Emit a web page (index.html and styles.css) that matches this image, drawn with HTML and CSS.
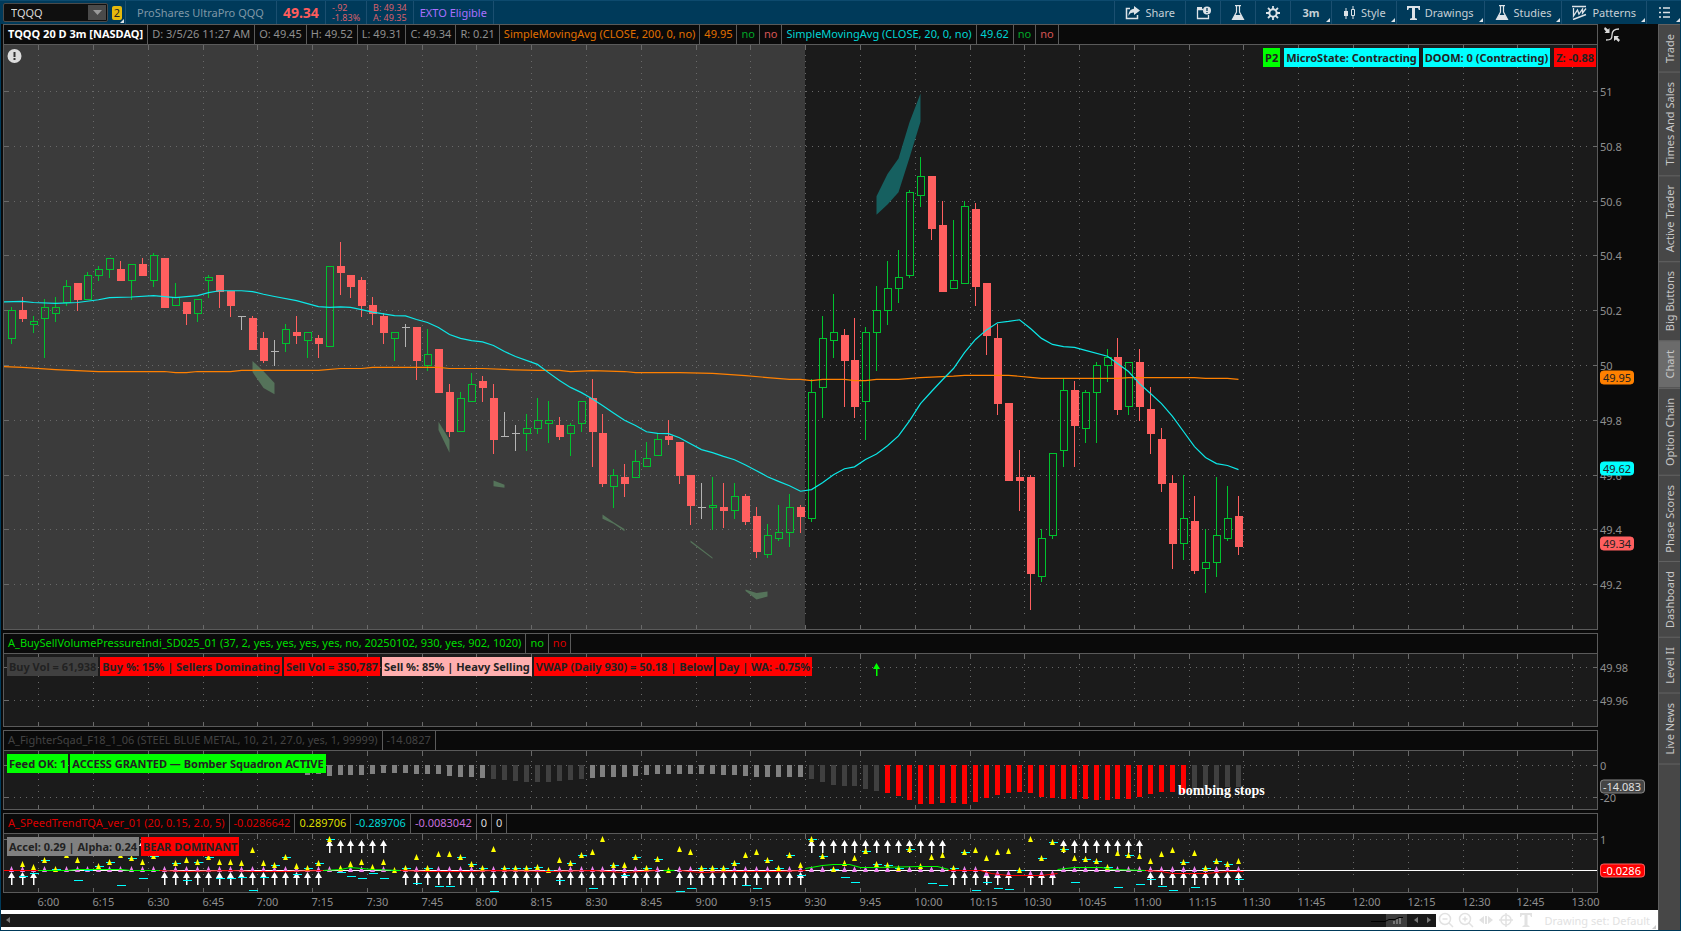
FILE: index.html
```html
<!DOCTYPE html>
<html lang="en">
<head>
  <meta charset="UTF-8">
  <title>TQQQ - Charts</title>
  <link rel="stylesheet" href="styles.css">
</head>
<body>

  <!-- TOP BAR -->
  <header class="topbar">
    <div class="symbol">
      <input type="text" class="symbol-input" aria-label="Symbol" value="TQQQ">
      <button class="symbol-drop" aria-label="Symbol list"><svg width="9" height="5"><path d="M0 0h9L4.5 5z"/></svg></button>
    </div>
    <button class="link-badge corner">2</button>
    <div class="quote name">ProShares UltraPro QQQ</div>
    <div class="quote last">49.34</div>
    <div class="quote pair"><span>-.92</span><span>-1.83%</span></div>
    <div class="quote pair"><span>B: 49.34</span><span>A: 49.35</span></div>
    <div class="quote exto">EXTO Eligible</div>

    <nav class="tools">
      <button class="tool share">
        <svg width="15" height="14" viewBox="0 0 15 14"><path d="M5 2.5H1.500v10h11V9" fill="none" stroke="#dde3e8" stroke-width="1.5"/><path d="M9 0l6 4.5L9 9V6.500C6 6.500 4.500 7.500 3.500 10 3.500 6 5.500 3 9 2.800z" fill="#dde3e8"/></svg>
        Share
      </button>
      <button class="tool icon-only" aria-label="Window">
        <svg width="15" height="14" viewBox="0 0 15 14"><path d="M7 3.5H1.500v9h11V9" fill="none" stroke="#dde3e8" stroke-width="1.3"/><path d="M1 1h5v2H1z" fill="#dde3e8"/><circle cx="11" cy="4.5" r="4" fill="#dde3e8"/><path d="M11 2v3M11 6v1" stroke="#003a5a" stroke-width="1.3"/></svg>
      </button>
      <button class="tool icon-only" aria-label="Edit studies">
        <svg width="14" height="16" viewBox="0 0 14 16"><path d="M4 .7h6M5.500 1v6L1.500 14.500h11L8.500 7V1" fill="none" stroke="#dde3e8" stroke-width="1.2"/><path d="M4 10h6l3 5H1z" fill="#dde3e8"/></svg>
      </button>
      <button class="tool icon-only" aria-label="Settings">
        <svg width="14" height="14" viewBox="0 0 14 14"><circle cx="7" cy="7" r="3.7" fill="none" stroke="#dde3e8" stroke-width="2"/><path d="M7 0v3M7 11v3M0 7h3M11 7h3M2 2l2.200 2.200M9.800 9.800L12 12M12 2L9.800 4.200M4.200 9.800L2 12" stroke="#dde3e8" stroke-width="1.8"/></svg>
      </button>
      <button class="tool interval corner">3m</button>
      <button class="tool corner">
        <svg width="14" height="14" viewBox="0 0 14 14"><path d="M4 2v11M11 0v3M11 9v4" stroke="#dde3e8"/><path d="M2 5h4v5H2z" fill="#dde3e8"/><path d="M9.500 3.500h3v6h-3z" fill="none" stroke="#dde3e8"/></svg>
        Style
      </button>
      <button class="tool corner">
        <svg width="13" height="14" viewBox="0 0 13 14"><path d="M0 0h13v4h-1.200l-.8-2H8v10l2 .8V14H3v-1.200l2-.8V2H2l-.8 2H0z" fill="#dde3e8"/></svg>
        Drawings
      </button>
      <button class="tool corner">
        <svg width="14" height="16" viewBox="0 0 14 16"><path d="M4 .7h6M5.500 1v6L1.500 14.500h11L8.500 7V1" fill="none" stroke="#dde3e8" stroke-width="1.2"/><path d="M4 10h6l3 5H1z" fill="#dde3e8"/></svg>
        Studies
      </button>
      <button class="tool corner">
        <svg width="15" height="15" viewBox="0 0 15 15"><path d="M0 1.500h14M1 14.500l13-5" stroke="#dde3e8" stroke-width="1.6"/><path d="M1.500 3v8l4-6 1.500 4 3.500-5v4l3.500-4.500" fill="none" stroke="#dde3e8" stroke-width="1.3"/></svg>
        Patterns
      </button>
      <button class="tool icon-only corner" aria-label="Menu">
        <svg width="11" height="11" viewBox="0 0 11 11"><path d="M0 1h2M4 1h7M0 5.500h2M4 5.500h7M0 10h2M4 10h7" stroke="#dde3e8" stroke-width="1.6"/></svg>
      </button>
    </nav>
  </header>

  <div class="workspace">
    <main class="charts">

      <!-- PRICE -->
      <section class="panel panel-price">
        <div class="panel-head">
          <span class="cell title">TQQQ 20 D 3m [NASDAQ]</span>
          <span class="cell">D: 3/5/26 11:27 AM</span>
          <span class="cell">O: 49.45</span>
          <span class="cell">H: 49.52</span>
          <span class="cell">L: 49.31</span>
          <span class="cell">C: 49.34</span>
          <span class="cell">R: 0.21</span>
          <span class="cell orange">SimpleMovingAvg (CLOSE, 200, 0, no)</span>
          <span class="cell orange">49.95</span>
          <span class="cell green">no</span>
          <span class="cell rose">no</span>
          <span class="cell cyan">SimpleMovingAvg (CLOSE, 20, 0, no)</span>
          <span class="cell cyan">49.62</span>
          <span class="cell green">no</span>
          <span class="cell rose">no</span>
        </div>
        <div class="plot">
          <svg id="price"></svg>
          <div class="labels labels-right">
            <span class="label bg-lime">P2</span>
            <span class="label bg-cyan">MicroState: Contracting</span>
            <span class="label bg-cyan">DOOM: 0 (Contracting)</span>
            <span class="label bg-red">Z: -0.88</span>
          </div>
        </div>
      </section>

      <!-- VOLUME PRESSURE -->
      <section class="panel">
        <div class="panel-head">
          <span class="cell lime">A_BuySellVolumePressureIndi_SD025_01 (37, 2, yes, yes, yes, yes, no, 20250102, 930, yes, 902, 1020)</span>
          <span class="cell lime">no</span>
          <span class="cell red">no</span>
        </div>
        <div class="plot plot-volume">
          <svg id="volume"></svg>
          <div class="labels">
            <span class="label bg-gray">Buy Vol = 61,938</span>
            <span class="label bg-red">Buy %: 15% | Sellers Dominating</span>
            <span class="label bg-red">Sell Vol = 350,787</span>
            <span class="label bg-pink">Sell %: 85% | Heavy Selling</span>
            <span class="label bg-red">VWAP (Daily 930) = 50.18 | Below</span>
            <span class="label bg-red">Day | WA: -0.75%</span>
          </div>
        </div>
      </section>

      <!-- SQUADRON -->
      <section class="panel">
        <div class="panel-head">
          <span class="cell dim">A_FighterSqad_F18_1_06 (STEEL BLUE METAL, 10, 21, 27.0, yes, 1, 99999)</span>
          <span class="cell dim">-14.0827</span>
        </div>
        <div class="plot plot-small">
          <svg id="squadron"></svg>
          <div class="labels">
            <span class="label bg-lime">Feed OK: 1</span>
            <span class="label bg-lime">ACCESS GRANTED — Bomber Squadron ACTIVE</span>
          </div>
        </div>
      </section>

      <!-- SPEED TREND -->
      <section class="panel">
        <div class="panel-head">
          <span class="cell red">A_SPeedTrendTQA_ver_01 (20, 0.15, 2.0, 5)</span>
          <span class="cell red">-0.0286642</span>
          <span class="cell yellow">0.289706</span>
          <span class="cell cyan">-0.289706</span>
          <span class="cell violet">-0.0083042</span>
          <span class="cell white">0</span>
          <span class="cell white">0</span>
        </div>
        <div class="plot plot-small">
          <svg id="speed"></svg>
          <div class="labels">
            <span class="label bg-silver">Accel: 0.29 | Alpha: 0.24</span>
            <span class="label bg-red">BEAR DOMINANT</span>
          </div>
        </div>
      </section>

      <div class="time-axis"><svg id="times"></svg></div>

      <button class="axis-button" aria-label="Fit axes">
        <svg width="16" height="15" viewBox="0 0 16 15"><path d="M2 13c5 0 6-1 6-5s2-6 7-6" fill="none" stroke="#d8d8d8" stroke-width="1.3"/><path d="M1 0l3 2.500L5.500 1v5H.5L2 4.500 0 2zM10 9h5l-1.500 1.500L16 13l-1.500 2-2.500-2.500L10 14z" fill="#d8d8d8"/></svg>
      </button>
    </main>

    <!-- SIDE TABS -->
    <aside class="side">
      <button class="tab">Trade</button>
      <button class="tab">Times And Sales</button>
      <button class="tab">Active Trader</button>
      <button class="tab">Big Buttons</button>
      <button class="tab active">Chart</button>
      <button class="tab">Option Chain</button>
      <button class="tab">Phase Scores</button>
      <button class="tab">Dashboard</button>
      <button class="tab">Level II</button>
      <button class="tab">Live News</button>
    </aside>

    <!-- BOTTOM BAR -->
    <footer class="bottombar">
      <div class="scroll">
        <button class="arrow" aria-label="Scroll left"><svg width="4" height="6"><path d="M4 0v6L0 3z"/></svg></button>
        <div class="track">
          <div class="thumb"><svg width="36" height="9" viewBox="0 0 36 9"><path d="M22 8V5h2v3M25 8V3h2v5M28 8V2h2v6" fill="#777"/><path d="M0 5.500h14l4-2h6l4-2h4" fill="none" stroke="#000"/></svg></div>
        </div>
        <button class="arrow" aria-label="Back"><svg width="4" height="6"><path d="M4 0v6L0 3z"/></svg></button>
        <button class="arrow" aria-label="Forward"><svg width="4" height="6"><path d="M0 0v6l4-3z"/></svg></button>
      </div>
      <div class="draw-tools">
        <button aria-label="Zoom out"><svg width="16" height="16" viewBox="0 0 16 16"><circle cx="7" cy="7" r="5.5"/><path d="M4.500 7h5M11 11l4 4"/></svg></button>
        <button aria-label="Zoom in"><svg width="16" height="16" viewBox="0 0 16 16"><circle cx="7" cy="7" r="5.5"/><path d="M4.500 7h5M7 4.500v5M11 11l4 4"/></svg></button>
        <button aria-label="Pan"><svg width="16" height="16" viewBox="0 0 16 16"><path d="M6 4v8L1 8zM10 4v8l5-4zM7 4h2v8H7z" fill="#e2e2e2" stroke="none"/></svg></button>
        <button aria-label="Crosshair"><svg width="16" height="16" viewBox="0 0 16 16"><circle cx="8" cy="8" r="5"/><path d="M8 1v14M1 8h14"/></svg></button>
        <button aria-label="Text"><svg width="16" height="16" viewBox="0 0 16 16"><path d="M2 1h12v4h-1l-1-2H9.500v10l2 1v1h-7v-1l2-1V3H4L3 5H2z" fill="#e2e2e2" stroke="none"/></svg></button>
      </div>
      <button class="drawing-set corner">Drawing set: Default</button>
    </footer>
  </div>

  <script src="chart.js"></script>
</body>
</html>
```

FILE: styles.css
```css
* {
  box-sizing: border-box;
}

body {
  margin: 0;
  height: 100vh;
  display: flex;
  flex-direction: column;
  overflow: hidden;
  background-color: #003a5a;
  color: #8f8f8f;
  font-family: "Noto Sans", "Open Sans", sans-serif;
  font-size: 11px;
}

button,
input {
  font: inherit;
  color: inherit;
  border: none;
  padding: 0;
  margin: 0;
  background: none;
}

button {
  cursor: pointer;
}

svg {
  display: block;
}

/* top bar */
.topbar {
  display: flex;
  align-items: stretch;
  height: 24px;
  padding-left: 3px;
  border-top: 1px solid #0d4a6e;
}

.symbol {
  display: flex;
  width: 105px;
  height: 19px;
  margin-top: 2px;
  padding: 1px;
  border: 1px solid #4a4a4a;
  border-radius: 2px;
  background-color: #0f0f0f;
}

.symbol-input {
  flex: 1;
  min-width: 0;
  padding-left: 6px;
  color: #d8d8d8;
}

.symbol-drop {
  display: flex;
  align-items: center;
  justify-content: center;
  width: 18px;
  background-color: #4a4a4a;
}

.symbol-drop svg {
  fill: #999;
}

.link-badge {
  align-self: center;
  width: 10px;
  height: 14px;
  margin: 0 3px 0 4px;
  line-height: 14px;
  border-radius: 2px;
  background-color: #e5b90c;
  color: #222;
}

/* little triangle of drop-down buttons */
.corner {
  position: relative;
}

.corner::after {
  content: "";
  position: absolute;
  right: 1px;
  bottom: 2px;
  border-left: 4px solid transparent;
  border-bottom: 4px solid #dde3e8;
}

.link-badge.corner::after {
  right: -2px;
  bottom: -3px;
}

.quote {
  display: flex;
  align-items: center;
  padding: 0 6px;
  border-left: 1px solid #1b4f70;
  white-space: nowrap;
}

.quote.name {
  padding: 0 12px 0 11px;
  color: #7f97a6;
}

.quote.last {
  font-size: 14px;
  font-weight: bold;
  color: #ff5c5c;
}

.quote.pair {
  flex-direction: column;
  align-items: flex-start;
  justify-content: center;
  font-size: 9px;
  line-height: 10px;
  color: #d9606a;
}

.quote.exto {
  border-right: 1px solid #1b4f70;
  color: #a970ff;
}

.tools {
  display: flex;
  margin-left: auto;
}

.tool {
  display: flex;
  align-items: center;
  justify-content: center;
  gap: 5px;
  padding: 0 10px;
  border-left: 1px solid #1b4f70;
  color: #c6d0d6;
}

.tool.icon-only {
  width: 35px;
  padding: 0;
}

.tool.interval {
  width: 41px;
  padding: 0;
  font-weight: bold;
}

/* workspace */
.workspace {
  flex: 1;
  min-height: 0;
  display: grid;
  grid-template-columns: minmax(0, 1fr) 22px;
  grid-template-rows: minmax(0, 1fr) 20px;
  margin: 0 1px 1px 1px;
  background-color: #0a0a0a;
}

.charts {
  position: relative;
  display: flex;
  flex-direction: column;
  gap: 3px;
  padding: 0 60px 0 2px;
}

.panel {
  display: flex;
  flex-direction: column;
  border: 1px solid #5a5a5a;
}

.panel-price {
  flex: 1;
  min-height: 0;
}

.panel-head {
  display: flex;
  height: 20px;
  border-bottom: 1px solid #5a5a5a;
}

.cell {
  padding: 0 4px;
  line-height: 18px;
  border-right: 1px solid #5a5a5a;
  white-space: nowrap;
}

.title {
  font-weight: bold;
  color: #fff;
}

.orange { color: #e07000; }
.green { color: #00a828; }
.rose { color: #d65555; }
.cyan { color: #00d5d5; }
.lime { color: #00dc00; }
.red { color: #dc0000; }
.dim { color: #434343; }
.yellow { color: #dcdc00; }
.violet { color: #c76fdc; }
.white { color: #dcdcdc; }

.plot {
  position: relative;
  flex: 1;
  min-height: 0;
  background-color: #1b1b1b;
}

.plot svg {
  position: absolute;
  width: 100%;
  height: 100%;
  overflow: visible;
}

.plot-volume {
  flex: none;
  height: 72px;
}

.plot-small {
  flex: none;
  height: 58px;
}

.labels {
  position: absolute;
  top: 3px;
  left: 3px;
  display: flex;
  gap: 2px;
}

.labels-right {
  left: auto;
  right: 1px;
  gap: 4px;
}

.label {
  padding: 0 2px;
  line-height: 19px;
  font-weight: bold;
  color: #222;
  white-space: nowrap;
}

.bg-lime { background-color: #00ff00; }
.bg-cyan { background-color: #00ffff; }
.bg-red { background-color: #ff0000; }
.bg-gray { background-color: #404040; }
.bg-pink { background-color: #ffafaf; }
.bg-silver { background-color: #808080; }

.time-axis {
  height: 17px;
  margin-top: -3px;
}

.time-axis svg {
  width: 100%;
  height: 17px;
  overflow: visible;
}

svg text {
  font-family: "Noto Sans", "Open Sans", sans-serif;
  font-size: 11px;
  fill: #8f8f8f;
}

svg text.note {
  font-family: "Liberation Serif", serif;
  font-size: 14px;
  font-weight: bold;
  fill: #fff;
}

.axis-button {
  position: absolute;
  top: 3px;
  right: 38px;
}

/* side tabs */
.side {
  grid-column: 2;
  grid-row: 1 / 3;
  display: flex;
  flex-direction: column;
  background-color: #474747;
  border-left: 1px solid #5e5e5e;
}

.tab {
  width: 21px;
  padding: 9px 0;
  writing-mode: vertical-rl;
  transform: rotate(180deg);
  line-height: 21px;
  border-bottom: 1px solid #636363;
  color: #c8c8c8;
  white-space: nowrap;
}

.tab:last-child {
  border-top: 1px solid #636363;
}

.tab.active {
  background-color: #6b6b6b;
}

/* bottom bar */
.bottombar {
  display: flex;
  align-items: center;
  background-color: #fff;
  color: #e2e2e2;
}

.scroll {
  flex: 1;
  display: flex;
  height: 13px;
  background-color: #191919;
}

.arrow {
  display: flex;
  align-items: center;
  justify-content: center;
  width: 13px;
}

.arrow svg {
  fill: #777;
}

.track {
  flex: 1;
  display: flex;
  justify-content: flex-end;
}

.thumb {
  display: flex;
  align-items: center;
  justify-content: flex-end;
  width: 21px;
  margin-right: 3px;
  background-color: #3d3d3d;
}

.thumb svg {
  flex: none;
}

.draw-tools {
  display: flex;
  gap: 4px;
  padding: 0 11px 0 2px;
}

.draw-tools svg {
  fill: none;
  stroke: #e2e2e2;
  stroke-width: 1.5px;
}

.drawing-set {
  padding-right: 7px;
  margin-right: 1px;
}

.drawing-set.corner::after {
  bottom: -1px;
  border-bottom-color: #ccc;
}
```

FILE: chart.js
```js
// open, high, low, close in cents above or below 50.00, 3 minute bars from 5:51
const bars = [
  [10,21,8,20],[20,25,16,17],[15,18,12,16],[17,24,3,21],[19,25,16,21],[23,31,22,29],[30,30,20,24],[24,34,24,33],
  [33,36,31,35],[35,39,32,39],[35,38,31,31],[31,37,24,37],[37,39,33,33],[31,41,29,40],[39,39,21,21],[22,30,22,25],
  [23,23,15,19],[19,24,16,24],[31,33,25,32],[33,33,21,27],[27,27,18,22],[18,18,13,18],[17,18,6,6],[10,12,1,2],
  [5,9,0,5],[8,15,5,13],[12,18,8,11],[9,12,3,12],[10,11,3,8],[7,36,7,36],[36,45,26,34],[33,33,25,29],
  [31,32,18,22],[22,25,15,19],[18,19,8,12],[10,12,2,12],[14,15,7,14],[14,14,-5,2],[0,13,-2,4],[6,6,-10,-10],
  [-10,-7,-26,-24],[-24,-10,-24,-12],[-13,-3,-13,-7],[-6,-4,-13,-8],[-12,-7,-32,-27],[-26,-17,-26,-26],[-25,-22,-31,-25],[-25,-18,-31,-23],
  [-23,-12,-25,-20],[-21,-13,-28,-20],[-22,-19,-27,-26],[-25,-21,-33,-22],[-21,-13,-24,-13],[-12,-5,-37,-24],[-25,-18,-44,-43],[-44,-38,-52,-40],
  [-41,-36,-48,-43],[-41,-31,-41,-35],[-37,-28,-37,-34],[-33,-25,-33,-27],[-26,-20,-29,-27],[-28,-28,-43,-40],[-40,-40,-58,-51],[-52,-43,-56,-52],
  [-52,-41,-60,-51],[-52,-43,-59,-53],[-53,-43,-56,-48],[-48,-47,-58,-57],[-55,-52,-70,-68],[-69,-58,-70,-62],[-63,-51,-64,-61],[-61,-47,-66,-52],
  [-52,-51,-61,-55],[-56,-5,-57,-10],[-8,18,-19,10],[9,26,3,12],[11,13,-15,2],[2,17,-19,-15],[-13,14,-27,12],[12,29,-2,20],
  [20,38,15,28],[28,42,23,32],[33,64,32,63],[62,76,58,69],[69,69,46,50],[51,60,27,27],[28,53,28,31],[30,60,30,58],
  [57,59,22,29],[30,30,4,11],[10,15,-18,-14],[-14,-14,-42,-42],[-41,-31,-53,-42],[-41,-40,-89,-76],[-77,-60,-79,-63],[-62,-32,-63,-32],
  [-31,-5,-37,-9],[-9,-6,-37,-22],[-23,-9,-28,-10],[-10,1,-28,0],[0,6,-6,3],[3,10,-18,-16],[-15,1,-18,1],[1,6,-20,-15],
  [-16,-8,-32,-25],[-27,-23,-46,-43],[-43,-40,-74,-65],[-65,-40,-71,-56],[-57,-48,-76,-75],[-74,-60,-83,-72],[-72,-41,-77,-62],[-63,-44,-64,-56],
  [-55,-48,-69,-66]
];

// [bar, cents]
const sma20 = [
  [-1,23.2],[1,23.4],[2,23],[4,22.7],[6,23],[8,24],[9,24.8],[11,25],[13,25.5],[15,24.8],[17,25.5],[18,26.6],[19,27.3],[21,27.3],
  [22,27],[23,26],[24,25.2],[26,23.7],[28,21.5],[29,21.2],[30,21.4],[31,21.2],[32,20.4],[33,19.5],[35,18.2],[36,18.1],[37,16.8],
  [38,15.7],[39,13.9],[40,11.3],[41,9.9],[42,9.1],[43,8.6],[44,7.3],[45,5.1],[46,3.3],[48,0.4],[49,-2.6],[50,-5.5],[51,-8],
  [52,-9.9],[53,-12.2],[54,-14.6],[55,-17.3],[56,-20],[57,-21.9],[58,-24.2],[59,-24.8],[60,-24.9],[61,-26.4],[62,-28.6],[63,-30.7],
  [64,-31.8],[65,-33.2],[66,-34.4],[67,-36.3],[68,-38.4],[69,-40.6],[70,-42.3],[71,-43.9],[72,-45.9],[73,-45.3],[74,-42.8],
  [75,-39.9],[76,-37.7],[77,-37],[78,-34.3],[79,-32.3],[80,-29.3],[81,-25.7],[82,-20.2],[83,-13.9],[84,-9.5],[85,-5.2],[86,-1.1],
  [87,4.7],[88,9.5],[89,13],[90,15.6],[91,16.1],[92,16.7],[93,13.5],[94,9.9],[95,7.7],[96,6.9],[97,6.6],[98,5.5],[100,3.4],
  [101,0.7],[102,-2.2],[103,-6.6],[104,-10.2],[105,-13.9],[106,-18.6],[107,-24.1],[108,-29.6],[109,-33.6],[110,-35.8],[111,-36.5],[112,-38]
];
const sma200 = [
  [-1,-0.4],[1,-0.7],[4,-1.5],[8,-2.2],[14,-2.2],[15,-2.6],[16,-2.6],[17,-2.2],[20,-2.2],[21,-1.8],[28,-1.8],[30,-1.1],[32,-1.1],
  [33,-0.7],[39,-0.7],[40,-1.1],[43,-1.1],[46,-1.6],[48,-1.8],[50,-1.8],[51,-2.2],[53,-1.9],[56,-2.2],[57,-2.6],[61,-2.6],[64,-2.9],
  [67,-3.7],[69,-4.4],[71,-5.1],[72,-5.1],[73,-5.5],[74,-5.1],[76,-5.1],[77,-5.5],[78,-5.5],[79,-5.1],[81,-5.1],[83,-4.4],[86,-3.9],
  [87,-3.6],[91,-3.6],[93,-4.3],[94,-4.7],[101,-4.7],[102,-4.4],[108,-4.4],[109,-4.7],[111,-4.7],[112,-5.1]
];

const clouds = [
  { color: "#55735a", points: [[22,1.5],[23,-2.3],[24,-6.6],[24,-10.7],[23,-8.4],[22,-2.6]] },
  { color: "#55735a", points: [[39,-20.7],[40,-27.3],[40,-32],[39,-23.7]] },
  { color: "#55735a", points: [[44,-42.2],[45,-43.7],[45,-44.8],[44,-44.3]] },
  { color: "#55735a", points: [[54,-54.6],[55,-57.4],[56,-59.9],[56,-60.7],[55,-58],[54,-56.1]] },
  { color: "#55735a", points: [[62,-64.1],[64,-70.3],[64,-70.7],[62,-64.7]] },
  { color: "#55735a", points: [[67,-82],[68,-83.2],[69,-82.7],[69,-84.5],[68,-85.6],[67,-82.5]] },
  { color: "#166060", points: [[79,61.6],[80,69.7],[81,75.4],[82,88.6],[83,99.1],[83,88.8],[82,75.7],[81,63.1],[80,58.6],[79,54.9]] }
];

// histogram lengths from bar 24 on
const squad = [
  8,8,8,10,9,11,10,10,10,9,8,8,8,9,9,9,11,12,12,13,14,15,16,17,17,17,16,15,14,13,12,12,12,11,10,9,9,9,9,9,9,10,10,11,
  12,12,12,12,12,14,17,20,21,21,24,26,28,31,35,39,39,38,38,39,37,33,30,28,27,28,32,33,34,34,34,35,35,34,34,32,29,27,27,28,
  26,24,23,22,22
];

// acceleration, and bars where it points down
const accel = [
  0,6,3,10,1,15,10,0,4,8,15,12,8,14,0,7,10,8,13,8,8,7,20,7,5,13,4,2,7,31,2,6,8,3,8,0,2,13,2,16,16,13,6,2,21,2,2,2,3,0,
  10,7,15,18,31,5,5,13,2,11,0,21,18,2,2,2,7,15,18,10,2,15,5,31,14,1,7,12,19,6,5,2,21,4,13,15,2,18,20,12,18,19,0,31,12,28,
  21,12,11,9,3,17,15,14,9,16,20,8,17,2,9,6,9
];
const down = [1,2,6,10,12,16,19,20,21,22,23,26,30,31,32,33,34,37,39,40,44,50,53,54,56,61,62,67,68,72,76,77,84,85,88,89,90,91,93,97,101,103,104,105,106,108,112];
const upArrows = [[3,13],[29,34],[73,85],[96,103]];
const downArrows = [[0,2],[14,28],[36,48],[50,59],[61,72],[86,91],[93,95],[104,112]];
const trend = [
  { color: "#ff0000", points: [[-1,0],[2.5,0]] },
  { color: "#00ff00", points: [[2.5,0],[5,0],[6,1],[10,1],[11,0],[13.5,0]] },
  { color: "#ff0000", points: [[13.5,0],[16,-1],[20,0],[22,-1],[25,-1],[28.5,0]] },
  { color: "#00ff00", points: [[28.5,0],[30,1],[31,3],[33,1],[35.5,0]] },
  { color: "#ff0000", points: [[35.5,0],[38,-1],[42,-1],[44,0],[49,-1],[53,0],[56,-2],[59,0]] },
  { color: "#00ff00", points: [[59.5,0],[60.5,0]] },
  { color: "#ff0000", points: [[61,0],[63,-2],[66,-1],[70,-1],[72.5,0]] },
  { color: "#00ff00", points: [[72.5,2],[74,5],[75,6],[76.5,6],[77.5,3],[79,3],[83,4],[84.5,4],[85.5,1]] },
  { color: "#ff0000", points: [[85.5,0],[88.5,0],[89.5,-3],[91,-5],[94,-5],[95.5,-3]] },
  { color: "#00ff00", points: [[95.5,1],[97,3],[99.5,3],[100.5,1],[103.5,0]] },
  { color: "#ff0000", points: [[103.5,0],[105,-1],[106,-3],[109,-3],[111,-1],[112.5,-1]] }
];

const GREEN = "#00c22e";
const RED = "#ff5f5f";
const FIRST = 7.3;

let step = 10.957;

function barX(i) {
  return Math.floor(FIRST + i * step);
}

function rect(x, y, w, h, fill) {
  return `<rect x="${x}" y="${y}" width="${w}" height="${h}" fill="${fill}"/>`;
}

function line(x1, y1, x2, y2, dotted) {
  const dash = dotted ? ' stroke-dasharray="1 5"' : "";
  return `<line x1="${x1}" y1="${y1}" x2="${x2}" y2="${y2}" stroke="#696969"${dash}/>`;
}

function curve(points, color, y) {
  const list = points.map(p => `${Math.max(0, barX(p[0]) + 0.5)},${y(p[1])}`).join(" ");
  return `<polyline points="${list}" fill="none" stroke="${color}" stroke-width="1.2"/>`;
}

function gridX(k) {
  return Math.round(34.2 + k * 5 * step) + 0.5;
}

// dotted grid, edge ticks and scale numbers
function grid(w, h, rows) {
  let out = "";
  for (let k = 0; gridX(k) < w; k++) {
    const x = gridX(k);
    out += line(x, 10, x, h - 14, true) + line(x, 0, x, 5) + line(x, h - 4, x, h);
  }
  rows.forEach(([y, text]) => {
    y = Math.round(y) + 0.5;
    out += line(10, y, w - 8, y, true) + line(0, y, 5, y) + line(w - 4, y, w, y);
    out += `<text x="${w + 3}" y="${y + 4}">${text}</text>`;
  });
  return out;
}

function tag(w, y, text, fill, color, stroke) {
  const width = text.length > 5 ? 44 : 33;
  return `<rect x="${w + 3.5}" y="${y - 6.5}" width="${width}" height="13" rx="3" fill="${fill}" stroke="${stroke || fill}"/>` +
    `<text x="${w + 6}" y="${y + 4}" style="fill:${color}">${text}</text>`;
}

function arrow(x, y, color) {
  return `<path d="M${x - 3} ${y + 6}L${x + 0.5} ${y}L${x + 4} ${y + 6}z" fill="${color}"/>` + rect(x, y + 5, 1.5, 8, color);
}

function triangle(x, y, color) {
  return `<path d="M${x - 2} ${y + 3}L${x + 0.5} ${y - 3}L${x + 3} ${y + 3}z" fill="${color}"/>`;
}

function drawPrice(svg) {
  const w = svg.clientWidth, h = svg.clientHeight;
  const y = c => (320 - c * 2.739) * h / 584;
  let out = rect(0, 0, gridX(14) - 0.5, h, "#3b3b3b");
  const rows = [];
  for (let c = 100; c >= -80; c -= 20) {
    rows.push([y(c), String((5000 + c) / 100)]);
  }
  out += grid(w, h, rows);

  bars.forEach(([open, high, low, close], i) => {
    const x = barX(i);
    const top = Math.round(y(Math.max(open, close)));
    const bottom = Math.round(y(Math.min(open, close)));
    const hi = Math.round(y(high)), lo = Math.round(y(low));
    if (open === close) {
      out += rect(x, hi, 1, lo - hi + 1, "#b4b4b4") + rect(x - 3, top, 8, 1, "#b4b4b4");
    } else if (close > open) {
      out += rect(x, hi, 1, top - hi, GREEN) + rect(x, bottom, 1, lo - bottom + 1, GREEN);
      out += `<rect x="${x - 2.5}" y="${top + 0.5}" width="7" height="${bottom - top}" fill="none" stroke="${GREEN}"/>`;
    } else {
      out += rect(x, hi, 1, lo - hi + 1, RED) + rect(x - 3, top, 8, bottom - top + 1, RED);
    }
  });

  clouds.forEach(c => {
    const list = c.points.map(p => `${barX(p[0]) + 0.5},${y(p[1])}`).join(" ");
    out += `<polygon points="${list}" fill="${c.color}"/>`;
  });
  out += curve(sma200, "#ff8000", c => y(c) + 0.5) + curve(sma20, "#0ce8e8", c => y(c) + 0.5);

  out += tag(w, Math.round(y(-4.5)) + 0.5, "49.95", "#ff8000", "#222");
  out += tag(w, Math.round(y(-37.5)) + 0.5, "49.62", "#00ffff", "#222");
  out += tag(w, Math.round(y(-65.5)) - 0.5, "49.34", "#ff5f5f", "#222");
  out += '<circle cx="10.5" cy="11" r="7" fill="#dcdcdc"/>' + rect(9.5, 7, 2, 5, "#333") + rect(9.5, 13, 2, 2, "#333");
  svg.innerHTML = out;
}

function drawVolume(svg) {
  const w = svg.clientWidth, h = svg.clientHeight;
  svg.innerHTML = grid(w, h, [[13, "49.98"], [46, "49.96"]]) + arrow(barX(79), 9, "#00ff00");
}

function drawSquadron(svg) {
  const w = svg.clientWidth, h = svg.clientHeight;
  let out = grid(w, h, [[14, "0"], [46, "-20"]]);
  squad.forEach((len, n) => {
    const i = n + 24;
    let color = "#808080";
    if ((i >= 44 && i <= 52) || (i >= 73 && i <= 79) || i >= 108) color = "#404040";
    if (i >= 80 && i <= 107) color = "#ff0000";
    out += rect(barX(i) - 2, 14, 5, len, color);
  });
  out += tag(w, 35.5, "-14.083", "#444", "#e0e0e0", "#888");
  out += `<text class="note" x="${barX(107) - 5}" y="44">bombing stops</text>`;
  svg.innerHTML = out;
}

function drawSpeed(svg) {
  const w = svg.clientWidth, h = svg.clientHeight;
  const zero = 36;
  let out = grid(w, h, [[5, "1"]]) + rect(0, zero, w, 1, "#fff");
  downArrows.forEach(([a, b]) => {
    for (let i = a; i <= b; i++) out += arrow(barX(i), zero + 2, "#fff");
  });
  upArrows.forEach(([a, b]) => {
    for (let i = a; i <= b; i++) out += arrow(barX(i), 6, "#fff");
  });
  accel.forEach((v, i) => {
    const x = barX(i);
    const cy = zero + (down.includes(i) ? v : -v);
    const lift = i >= 89 && i <= 95 ? -3 : 1;
    if (v > 1 || i === 0 || i === 7 || i === 14) out += triangle(x, zero - lift, "#ee82ee");
    if (cy < h) out += rect(x - 3, cy, 9, 1, "#00ffff");
    if (v > 0 || i > 14) out += triangle(x, zero - v, "#ffff00");
  });
  trend.forEach(t => {
    out += curve(t.points, t.color, v => zero + 0.5 - v);
  });
  out += tag(w, 36.5, "-0.0286", "#ff0000", "#fff", "#ff6060");
  svg.innerHTML = out;
}

function drawTimes(svg) {
  let out = "";
  for (let k = 0; gridX(k) < svg.clientWidth; k++) {
    const minutes = 360 + k * 15;
    const label = Math.floor(minutes / 60) + ":" + String(minutes % 60).padStart(2, "0");
    out += `<text x="${gridX(k)}" y="13">${label}</text>`;
  }
  svg.innerHTML = out;
}

function draw() {
  const price = document.getElementById("price");
  step = 10.957 * price.clientWidth / 1593;
  drawPrice(price);
  drawVolume(document.getElementById("volume"));
  drawSquadron(document.getElementById("squadron"));
  drawSpeed(document.getElementById("speed"));
  drawTimes(document.getElementById("times"));
}

window.addEventListener("resize", draw);
draw();
```
